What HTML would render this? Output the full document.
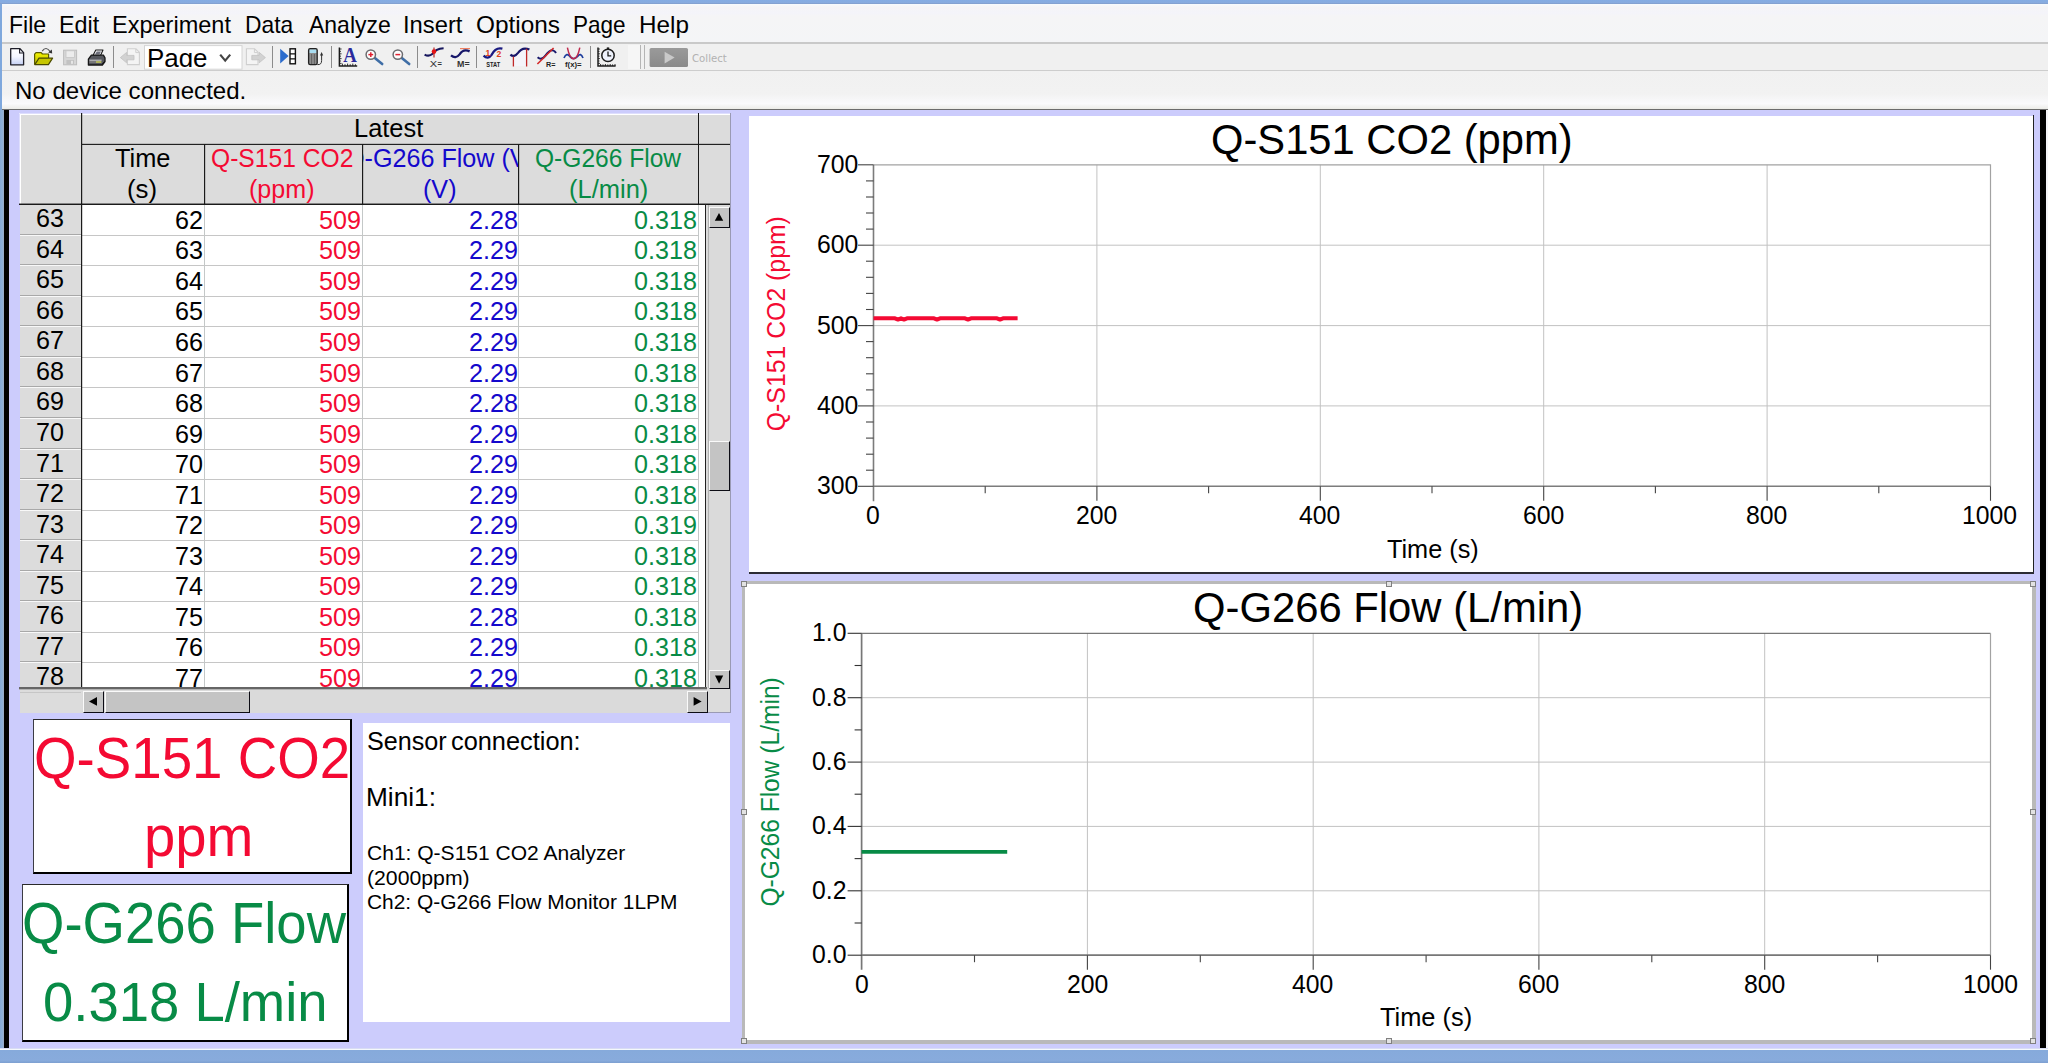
<!DOCTYPE html>
<html lang="en"><head><meta charset="utf-8"><title>Logger Pro</title>
<style>
html,body{margin:0;padding:0}
body{width:2048px;height:1063px;position:relative;overflow:hidden;background:#ccccfc;font-family:"Liberation Sans",sans-serif}
.t{position:absolute;white-space:pre;line-height:1;transform-origin:0 0;display:block}
.b{position:absolute}
svg{position:absolute;overflow:visible}
</style></head>
<body>
<div id="titlebar-edge" class="b" style="left:0;top:0;width:2048px;height:4px;background:linear-gradient(#84ade3 0,#88abde 70%,#7f9bc8 100%)"></div>
<div id="menubar" class="b" style="left:0;top:4px;width:2048px;height:38px;background:linear-gradient(#f7fbfd 0,#f5f5f6 3px,#f4f4fa 9px,#f5f5f6 12px,#f4f5f7 100%)"></div>
<div class="b" style="left:0px;top:42px;width:2048px;height:2px;background:#c9c9c9;"></div>
<div id="toolbar" class="b" style="left:0;top:44px;width:2048px;height:26px;background:#f0f0f0"></div>
<div class="b" style="left:0px;top:70px;width:2048px;height:1px;background:#cdcdcd;"></div>
<div id="statusbar" class="b" style="left:0;top:71px;width:2048px;height:38px;background:linear-gradient(#f1f1f1 0,#f2f2f2 60%,#fafafc 86%,#ecece8 100%)"></div>
<div class="b" style="left:0px;top:109px;width:2048px;height:1px;background:#6c6c6c;"></div>
<div class="b" style="left:0px;top:4px;width:2px;height:106px;background:#7fa8dd;"></div>
<div class="b" style="left:0px;top:110px;width:4px;height:939px;background:linear-gradient(90deg,#86a9d6,#8eafd8 60%,#9ca9c0);"></div>
<div class="b" style="left:4px;top:110px;width:5px;height:938px;background:#000;"></div>
<div class="b" style="left:2040px;top:110px;width:6px;height:938px;background:#000;"></div>
<div class="b" style="left:2046px;top:110px;width:2px;height:938px;background:#f4f4f8;"></div>
<div class="b" style="left:0px;top:1048px;width:2048px;height:1px;background:#d8dcf4;"></div>
<div class="b" style="left:0px;top:1049px;width:2048px;height:1px;background:#f4f8fc;"></div>
<div class="b" style="left:0px;top:1050px;width:2048px;height:13px;background:linear-gradient(#86aadb,#88abdc 80%,#7d9fd0);"></div>
<div id="menu">
<span class="t" style="left:8.70px;top:13.00px;font-size:24px;color:#000;transform:scaleX(0.9596);">File</span>
<span class="t" style="left:58.77px;top:13.00px;font-size:24px;color:#000;transform:scaleX(0.9724);">Edit</span>
<span class="t" style="left:112.26px;top:13.00px;font-size:24px;color:#000;transform:scaleX(0.9797);">Experiment</span>
<span class="t" style="left:245.12px;top:13.00px;font-size:24px;color:#000;transform:scaleX(0.9515);">Data</span>
<span class="t" style="left:308.74px;top:13.00px;font-size:24px;color:#000;transform:scaleX(0.9573);">Analyze</span>
<span class="t" style="left:402.80px;top:13.00px;font-size:24px;color:#000;transform:scaleX(0.9896);">Insert</span>
<span class="t" style="left:475.64px;top:13.00px;font-size:24px;color:#000;transform:scaleX(1.0154);">Options</span>
<span class="t" style="left:572.54px;top:13.00px;font-size:24px;color:#000;transform:scaleX(0.9389);">Page</span>
<span class="t" style="left:638.80px;top:13.00px;font-size:24px;color:#000;transform:scaleX(1.0112);">Help</span>
</div>
<span class="t" style="left:14.92px;top:79.00px;font-size:24px;color:#000;transform:scaleX(1.0019);">No device connected.</span>
<svg id="tbicons" style="left:0;top:44px" width="760" height="27" viewBox="0 44 760 27">
<defs>
<linearGradient id="gpage" x1="0" y1="0" x2="0" y2="1"><stop offset="0" stop-color="#fff"/><stop offset=".5" stop-color="#f4f6ff"/><stop offset="1" stop-color="#c4d0f4"/></linearGradient>
<linearGradient id="gfold" x1="0" y1="0" x2="0" y2="1"><stop offset="0" stop-color="#f6f600"/><stop offset="1" stop-color="#b8b800"/></linearGradient>
<linearGradient id="gcoll" x1="0" y1="0" x2="0" y2="1"><stop offset="0" stop-color="#9a9a9a"/><stop offset="1" stop-color="#8a8a8a"/></linearGradient>
</defs>
<rect x="113" y="46" width="1" height="22" fill="#8c8c8c"/>
<rect x="272" y="46" width="1" height="22" fill="#8c8c8c"/>
<rect x="331" y="46" width="1" height="22" fill="#8c8c8c"/>
<rect x="417" y="46" width="1" height="22" fill="#8c8c8c"/>
<rect x="476" y="46" width="1" height="22" fill="#8c8c8c"/>
<rect x="590" y="46" width="1" height="22" fill="#8c8c8c"/>
<rect x="640" y="45" width="1" height="24" fill="#b4b4b4"/>
<rect x="644" y="45" width="1" height="24" fill="#b4b4b4"/>
<rect x="628" y="45" width="12" height="24" fill="#f6f6f6"/>
<path d="M10.7 48.7 H20 L23.6 52.6 V64.8 H10.7 Z" fill="url(#gpage)" stroke="#1e1e28" stroke-width="1.3" stroke-linejoin="round"/><path d="M19.6 48.9 V53 H23.4" fill="none" stroke="#1e1e28" stroke-width="1.1"/>
<path d="M34.6 64.4 V54.2 L36 52.6 H41.2 L42.4 54 H48.6 V58" fill="url(#gfold)" stroke="#5a5a00" stroke-width="1.2" stroke-linejoin="round"/><path d="M34.8 64.6 L39 58.2 H52.6 L48.4 64.6 Z" fill="#c6c600" stroke="#4a4a00" stroke-width="1.2" stroke-linejoin="round"/><path d="M42.2 51.2 Q46 45.6 50.2 51.6" fill="none" stroke="#555" stroke-width="1.2"/><path d="M48.2 52.4 L52.2 53.6 L51.8 49.4 Z" fill="#333"/>
<rect x="63.6" y="50.2" width="13" height="14.6" fill="#d6d6d6" stroke="#bdbdbd" stroke-width="1"/><rect x="66" y="50.8" width="8.4" height="6.6" fill="#ececec" stroke="#c6c6c6" stroke-width=".8"/><rect x="66.4" y="60" width="7.6" height="4.4" fill="#c2c2c2"/><rect x="71" y="60.8" width="2" height="3" fill="#e6e6e6"/>
<path d="M92.8 55.8 L95.8 50 H103 L100.4 55.8 Z" fill="#f4f4f6" stroke="#1c1c1c" stroke-width="1.1" stroke-linejoin="round"/><path d="M95 54.6 L96.8 51.6 H101 L99.4 54.6 Z" fill="#6c6e7a"/><path d="M88.4 59.2 L91.4 55.2 H103.4 L105 57.8 V61.6 L102.4 65 H88.4 Z" fill="#55575d" stroke="#161616" stroke-width="1.3" stroke-linejoin="round"/><path d="M89.4 60.2 H101.6" stroke="#e4e4e4" stroke-width=".9"/><path d="M89.4 62 H96 " stroke="#8c8c8c" stroke-width="1.3"/><path d="M96 62 H101.4" stroke="#d8dc60" stroke-width="1.4"/><path d="M101.8 64.6 L104.6 61.4" stroke="#161616" stroke-width="1"/>
<path d="M127.4 48.8 H136 L139.4 52.2 V64.6 H127.4 Z" fill="#f4f4f4" stroke="#cfcfcf" stroke-width="1.1"/><path d="M135.8 49 V52.6 H139.2" fill="none" stroke="#cfcfcf" stroke-width="1"/><path d="M120.4 57.6 L126.6 52.4 V55.4 H134 V59.8 H126.6 V62.8 Z" fill="#d2d2d2" stroke="#c2c2c2" stroke-width=".8"/>
<path d="M246.4 48.8 H254.6 L258 52.2 V64.6 H246.4 Z" fill="#f4f4f4" stroke="#cfcfcf" stroke-width="1.1"/><path d="M254.4 49 V52.6 H257.8" fill="none" stroke="#cfcfcf" stroke-width="1"/><path d="M265.4 57.6 L259.2 52.4 V55.4 H251.8 V59.8 H259.2 V62.8 Z" fill="#d2d2d2" stroke="#c2c2c2" stroke-width=".8"/>
<rect x="144.5" y="45.6" width="97.5" height="23.6" fill="#fff" stroke="#d4d4d4" stroke-width="1"/>
<path d="M220.2 54.6 L225.2 60.6 L230.2 54.6" fill="none" stroke="#444" stroke-width="2.2"/>
<path d="M280.2 48.8 L288.6 56 L280.2 63.4 Z" fill="#2c6ccc"/><rect x="290" y="48.8" width="5.4" height="15" fill="#fff" stroke="#111" stroke-width="1.4"/><path d="M290 53.8 H295.4 M290 58.8 H295.4" stroke="#111" stroke-width="1.3"/>
<rect x="308.6" y="48.6" width="8.6" height="16" rx="1.6" fill="#8c8c8c" stroke="#222" stroke-width="1.3"/><rect x="309.6" y="49.6" width="6.6" height="3.4" fill="#a8dcf0"/><path d="M311.6 54 V64 M314.4 54 V64" stroke="#555" stroke-width=".8"/><path d="M317.4 64.6 Q321.6 65 321.6 60.6 V54" fill="none" stroke="#333" stroke-width="1"/><path d="M320 55.4 L321.6 52 L323.2 55.4 Z" fill="#333"/>
<path d="M339.4 47.4 V66 H357.2" fill="none" stroke="#1c1c1c" stroke-width="1.5"/><path d="M339.4 49 h2.2 M339.4 51.4 h1.6 M339.4 53.8 h2.2 M339.4 56.2 h1.6 M339.4 58.6 h2.2 M339.4 61 h1.6 M339.4 63.4 h2.2" stroke="#1c1c1c" stroke-width=".8"/><path d="M342.4 66 v-2.4 M345 66 v-1.8 M347.6 66 v-2.4 M350.2 66 v-1.8 M352.8 66 v-2.4 M355.4 66 v-1.8" stroke="#1c1c1c" stroke-width=".9"/>
<text x="343.2" y="62" font-family="Liberation Serif,serif" font-weight="bold" font-size="20" fill="#2a2a9c" textLength="13.6" lengthAdjust="spacingAndGlyphs">A</text>
<path d="M374.2 57.4 L382.2 64" stroke="#3f6ea6" stroke-width="2.6" stroke-linecap="round"/>
<circle cx="370.8" cy="54.6" r="4.7" fill="#fdfdfd" stroke="#6c6c70" stroke-width="1.5"/>
<path d="M368.40000000000003 54.6 H373.2" stroke="#e02030" stroke-width="1.5"/>
<path d="M370.8 52.2 V57" stroke="#e02030" stroke-width="1.5"/>
<path d="M401.2 57.4 L409.2 64" stroke="#3f6ea6" stroke-width="2.6" stroke-linecap="round"/>
<circle cx="397.8" cy="54.6" r="4.7" fill="#fdfdfd" stroke="#6c6c70" stroke-width="1.5"/>
<path d="M395.40000000000003 54.6 H400.2" stroke="#e02030" stroke-width="1.5"/>
<path d="M424.6 54.6 Q429 57 432.6 53.8 Q435.6 48.6 443.6 48.2" fill="none" stroke="#17175e" stroke-width="2.1"/><path d="M434 47.4 V57.6" stroke="#b01818" stroke-width="1.1"/><circle cx="434" cy="51.6" r="2.3" fill="#e41414"/>
<text x="429.8" y="67.2" font-size="9.4" fill="#333" textLength="7.4" lengthAdjust="spacingAndGlyphs">X</text>
<text x="437.6" y="65.6" font-size="7.5" font-weight="bold" fill="#333">=</text>
<path d="M460 48.6 H470" stroke="#f08060" stroke-width="1.2"/><path d="M451 55.4 Q455.6 59.4 459.6 54.4 Q463.4 48.4 469.6 51.4" fill="none" stroke="#17176a" stroke-width="2.3"/>
<text x="457" y="66.8" font-size="8.6" font-weight="bold" fill="#333" textLength="12.6" lengthAdjust="spacingAndGlyphs">M=</text>
<path d="M483.6 55.6 Q488 60 491.8 54.6 Q495.4 47 502.4 48.6" fill="none" stroke="#1a1a80" stroke-width="2.3"/>
<text x="485.6" y="56.4" font-size="8.6" font-weight="bold" fill="#e0401c">1</text>
<text x="496.4" y="57" font-size="8.6" font-weight="bold" fill="#e0401c">2</text>
<text x="486.2" y="67.2" font-size="7.6" font-weight="bold" fill="#222" textLength="14" lengthAdjust="spacingAndGlyphs">STAT</text>
<path d="M513.4 56.4 Q517 53.6 519.8 50.6 Q523 47 526.6 48.6 V66 H513.4 Z" fill="#f4f4fa" stroke="none"/><path d="M510.4 54.6 Q514 58 518 52.8 Q522.6 46.4 529.4 49.6" fill="none" stroke="#17176a" stroke-width="2.2"/><path d="M513.4 56.4 V66.4 M526.6 48.8 V66.4" stroke="#c02828" stroke-width="1.3"/>
<path d="M537.6 57.2 Q541.6 60.8 545.4 55.6 Q549.4 50 553 50.4 Q555 51 556 53" fill="none" stroke="#17176a" stroke-width="2"/><path d="M537.4 64 L553.6 48" stroke="#d42828" stroke-width="1.6"/>
<text x="546" y="67" font-size="8" font-weight="bold" fill="#222" textLength="9.4" lengthAdjust="spacingAndGlyphs">R=</text>
<path d="M564 58 Q566.6 52 570 56.6 Q573.6 60.8 577.6 56.4 Q580.6 52 583 58" fill="none" stroke="#1c3c9c" stroke-width="1.7"/><path d="M567.4 47.6 Q569.6 58.6 573.6 58.8 Q577.6 58.6 579.8 47.6" fill="none" stroke="#c0284c" stroke-width="1.5"/>
<text x="565" y="67" font-size="7.4" font-weight="bold" fill="#222" textLength="16.6" lengthAdjust="spacingAndGlyphs">f(x)=</text>
<path d="M598 47.4 V66 H615.6" fill="none" stroke="#1c1c1c" stroke-width="1.5"/><path d="M598 49 h2 M598 51.4 h1.5 M598 53.8 h2 M598 56.2 h1.5 M598 58.6 h2 M598 61 h1.5 M598 63.4 h2" stroke="#1c1c1c" stroke-width=".8"/><path d="M600.6 66 v-2 M603 66 v-1.6 M605.4 66 v-2 M607.8 66 v-1.6 M610.2 66 v-2 M612.6 66 v-1.6 M615 66 v-2" stroke="#1c1c1c" stroke-width=".9"/><circle cx="608" cy="55.4" r="6.2" fill="#eef2fc" stroke="#1c1c1c" stroke-width="1.5"/><path d="M608 51.4 V55.8 H611.2" fill="none" stroke="#1c1c1c" stroke-width="1.3"/><rect x="606.8" y="47.4" width="2.4" height="1.6" fill="#1c1c1c"/>
<rect x="649.6" y="48" width="38.4" height="19" rx="1.6" fill="url(#gcoll)"/><path d="M664.6 51.8 L674.6 57.6 L664.6 63.6 Z" fill="#c9c9c9"/>
</svg>
<div id="pagedd" class="b" style="left:145px;top:46px;width:74px;height:21.4px;overflow:hidden"><span class="t" style="left:1.56px;top:-0.80px;font-size:26.6px;color:#000;transform:scaleX(0.9747);">Page</span></div>
<span class="t" style="font-family:'DejaVu Sans',sans-serif;left:692.44px;top:53.40px;font-size:11.2px;color:#b2b2b2;transform:scaleX(0.9082);">Collect</span>
<div id="table">
<div class="b" style="left:20px;top:114px;width:711px;height:599px;background:#dcdcdc;"></div>
<div class="b" style="left:19px;top:113px;width:712px;height:1px;background:rgba(255,255,255,.35);"></div>
<div class="b" style="left:19px;top:113px;width:1px;height:91px;background:rgba(255,255,255,.35);"></div>
<div class="b" style="left:20px;top:114px;width:711px;height:1px;background:#fff;"></div>
<div class="b" style="left:20px;top:114px;width:1px;height:90px;background:#fff;"></div>
<div class="b" style="left:82px;top:205px;width:624px;height:483px;background:#fff;"></div>
<div class="b" style="left:20px;top:234px;width:61px;height:1px;background:#a8a8a8;"></div>
<div class="b" style="left:20px;top:235px;width:61px;height:1px;background:#f8f8f8;"></div>
<div class="b" style="left:82px;top:235px;width:617px;height:1px;background:#c6c6c6;"></div>
<div class="b" style="left:20px;top:264px;width:61px;height:1px;background:#a8a8a8;"></div>
<div class="b" style="left:20px;top:265px;width:61px;height:1px;background:#f8f8f8;"></div>
<div class="b" style="left:82px;top:265px;width:617px;height:1px;background:#c6c6c6;"></div>
<div class="b" style="left:20px;top:295px;width:61px;height:1px;background:#a8a8a8;"></div>
<div class="b" style="left:20px;top:296px;width:61px;height:1px;background:#f8f8f8;"></div>
<div class="b" style="left:82px;top:296px;width:617px;height:1px;background:#c6c6c6;"></div>
<div class="b" style="left:20px;top:325px;width:61px;height:1px;background:#a8a8a8;"></div>
<div class="b" style="left:20px;top:326px;width:61px;height:1px;background:#f8f8f8;"></div>
<div class="b" style="left:82px;top:326px;width:617px;height:1px;background:#c6c6c6;"></div>
<div class="b" style="left:20px;top:356px;width:61px;height:1px;background:#a8a8a8;"></div>
<div class="b" style="left:20px;top:357px;width:61px;height:1px;background:#f8f8f8;"></div>
<div class="b" style="left:82px;top:357px;width:617px;height:1px;background:#c6c6c6;"></div>
<div class="b" style="left:20px;top:386px;width:61px;height:1px;background:#a8a8a8;"></div>
<div class="b" style="left:20px;top:387px;width:61px;height:1px;background:#f8f8f8;"></div>
<div class="b" style="left:82px;top:387px;width:617px;height:1px;background:#c6c6c6;"></div>
<div class="b" style="left:20px;top:417px;width:61px;height:1px;background:#a8a8a8;"></div>
<div class="b" style="left:20px;top:418px;width:61px;height:1px;background:#f8f8f8;"></div>
<div class="b" style="left:82px;top:418px;width:617px;height:1px;background:#c6c6c6;"></div>
<div class="b" style="left:20px;top:448px;width:61px;height:1px;background:#a8a8a8;"></div>
<div class="b" style="left:20px;top:449px;width:61px;height:1px;background:#f8f8f8;"></div>
<div class="b" style="left:82px;top:449px;width:617px;height:1px;background:#c6c6c6;"></div>
<div class="b" style="left:20px;top:478px;width:61px;height:1px;background:#a8a8a8;"></div>
<div class="b" style="left:20px;top:479px;width:61px;height:1px;background:#f8f8f8;"></div>
<div class="b" style="left:82px;top:479px;width:617px;height:1px;background:#c6c6c6;"></div>
<div class="b" style="left:20px;top:509px;width:61px;height:1px;background:#a8a8a8;"></div>
<div class="b" style="left:20px;top:510px;width:61px;height:1px;background:#f8f8f8;"></div>
<div class="b" style="left:82px;top:510px;width:617px;height:1px;background:#c6c6c6;"></div>
<div class="b" style="left:20px;top:539px;width:61px;height:1px;background:#a8a8a8;"></div>
<div class="b" style="left:20px;top:540px;width:61px;height:1px;background:#f8f8f8;"></div>
<div class="b" style="left:82px;top:540px;width:617px;height:1px;background:#c6c6c6;"></div>
<div class="b" style="left:20px;top:570px;width:61px;height:1px;background:#a8a8a8;"></div>
<div class="b" style="left:20px;top:571px;width:61px;height:1px;background:#f8f8f8;"></div>
<div class="b" style="left:82px;top:571px;width:617px;height:1px;background:#c6c6c6;"></div>
<div class="b" style="left:20px;top:600px;width:61px;height:1px;background:#a8a8a8;"></div>
<div class="b" style="left:20px;top:601px;width:61px;height:1px;background:#f8f8f8;"></div>
<div class="b" style="left:82px;top:601px;width:617px;height:1px;background:#c6c6c6;"></div>
<div class="b" style="left:20px;top:631px;width:61px;height:1px;background:#a8a8a8;"></div>
<div class="b" style="left:20px;top:632px;width:61px;height:1px;background:#f8f8f8;"></div>
<div class="b" style="left:82px;top:632px;width:617px;height:1px;background:#c6c6c6;"></div>
<div class="b" style="left:20px;top:661px;width:61px;height:1px;background:#a8a8a8;"></div>
<div class="b" style="left:20px;top:662px;width:61px;height:1px;background:#f8f8f8;"></div>
<div class="b" style="left:82px;top:662px;width:617px;height:1px;background:#c6c6c6;"></div>
<div class="b" style="left:204px;top:205px;width:1px;height:483px;background:#c4c8c8;"></div>
<div class="b" style="left:362px;top:205px;width:1px;height:483px;background:#c4c8c8;"></div>
<div class="b" style="left:518px;top:205px;width:1px;height:483px;background:#c4c8c8;"></div>
<div class="b" style="left:698px;top:205px;width:1px;height:483px;background:#c4c8c8;"></div>
<div class="b" style="left:19px;top:205px;width:690px;height:482.6px;overflow:hidden">
<span class="t" style="left:17.21px;top:0.80px;font-size:25.4px;color:#000;transform:scaleX(0.9900);">63</span>
<span class="t" style="left:156.23px;top:2.80px;font-size:25.4px;color:#000;transform:scaleX(0.9900);">62</span>
<span class="t" style="left:300.24px;top:2.80px;font-size:25.4px;color:#f40a33;transform:scaleX(0.9900);">509</span>
<span class="t" style="left:450.16px;top:2.80px;font-size:25.4px;color:#1408cc;transform:scaleX(0.9900);">2.28</span>
<span class="t" style="left:615.47px;top:2.80px;font-size:25.4px;color:#088b46;transform:scaleX(0.9900);">0.318</span>
<span class="t" style="left:17.21px;top:31.80px;font-size:25.4px;color:#000;transform:scaleX(0.9900);">64</span>
<span class="t" style="left:156.23px;top:32.80px;font-size:25.4px;color:#000;transform:scaleX(0.9900);">63</span>
<span class="t" style="left:300.24px;top:32.80px;font-size:25.4px;color:#f40a33;transform:scaleX(0.9900);">509</span>
<span class="t" style="left:450.16px;top:32.80px;font-size:25.4px;color:#1408cc;transform:scaleX(0.9900);">2.29</span>
<span class="t" style="left:615.47px;top:32.80px;font-size:25.4px;color:#088b46;transform:scaleX(0.9900);">0.318</span>
<span class="t" style="left:17.21px;top:61.80px;font-size:25.4px;color:#000;transform:scaleX(0.9900);">65</span>
<span class="t" style="left:156.23px;top:63.80px;font-size:25.4px;color:#000;transform:scaleX(0.9900);">64</span>
<span class="t" style="left:300.24px;top:63.80px;font-size:25.4px;color:#f40a33;transform:scaleX(0.9900);">509</span>
<span class="t" style="left:450.16px;top:63.80px;font-size:25.4px;color:#1408cc;transform:scaleX(0.9900);">2.29</span>
<span class="t" style="left:615.47px;top:63.80px;font-size:25.4px;color:#088b46;transform:scaleX(0.9900);">0.318</span>
<span class="t" style="left:17.21px;top:92.80px;font-size:25.4px;color:#000;transform:scaleX(0.9900);">66</span>
<span class="t" style="left:156.23px;top:93.80px;font-size:25.4px;color:#000;transform:scaleX(0.9900);">65</span>
<span class="t" style="left:300.24px;top:93.80px;font-size:25.4px;color:#f40a33;transform:scaleX(0.9900);">509</span>
<span class="t" style="left:450.16px;top:93.80px;font-size:25.4px;color:#1408cc;transform:scaleX(0.9900);">2.29</span>
<span class="t" style="left:615.47px;top:93.80px;font-size:25.4px;color:#088b46;transform:scaleX(0.9900);">0.318</span>
<span class="t" style="left:17.21px;top:122.80px;font-size:25.4px;color:#000;transform:scaleX(0.9900);">67</span>
<span class="t" style="left:156.23px;top:124.80px;font-size:25.4px;color:#000;transform:scaleX(0.9900);">66</span>
<span class="t" style="left:300.24px;top:124.80px;font-size:25.4px;color:#f40a33;transform:scaleX(0.9900);">509</span>
<span class="t" style="left:450.16px;top:124.80px;font-size:25.4px;color:#1408cc;transform:scaleX(0.9900);">2.29</span>
<span class="t" style="left:615.47px;top:124.80px;font-size:25.4px;color:#088b46;transform:scaleX(0.9900);">0.318</span>
<span class="t" style="left:17.21px;top:153.80px;font-size:25.4px;color:#000;transform:scaleX(0.9900);">68</span>
<span class="t" style="left:156.23px;top:155.80px;font-size:25.4px;color:#000;transform:scaleX(0.9900);">67</span>
<span class="t" style="left:300.24px;top:155.80px;font-size:25.4px;color:#f40a33;transform:scaleX(0.9900);">509</span>
<span class="t" style="left:450.16px;top:155.80px;font-size:25.4px;color:#1408cc;transform:scaleX(0.9900);">2.29</span>
<span class="t" style="left:615.47px;top:155.80px;font-size:25.4px;color:#088b46;transform:scaleX(0.9900);">0.318</span>
<span class="t" style="left:17.21px;top:183.80px;font-size:25.4px;color:#000;transform:scaleX(0.9900);">69</span>
<span class="t" style="left:156.23px;top:185.80px;font-size:25.4px;color:#000;transform:scaleX(0.9900);">68</span>
<span class="t" style="left:300.24px;top:185.80px;font-size:25.4px;color:#f40a33;transform:scaleX(0.9900);">509</span>
<span class="t" style="left:450.16px;top:185.80px;font-size:25.4px;color:#1408cc;transform:scaleX(0.9900);">2.28</span>
<span class="t" style="left:615.47px;top:185.80px;font-size:25.4px;color:#088b46;transform:scaleX(0.9900);">0.318</span>
<span class="t" style="left:17.21px;top:214.80px;font-size:25.4px;color:#000;transform:scaleX(0.9900);">70</span>
<span class="t" style="left:156.23px;top:216.80px;font-size:25.4px;color:#000;transform:scaleX(0.9900);">69</span>
<span class="t" style="left:300.24px;top:216.80px;font-size:25.4px;color:#f40a33;transform:scaleX(0.9900);">509</span>
<span class="t" style="left:450.16px;top:216.80px;font-size:25.4px;color:#1408cc;transform:scaleX(0.9900);">2.29</span>
<span class="t" style="left:615.47px;top:216.80px;font-size:25.4px;color:#088b46;transform:scaleX(0.9900);">0.318</span>
<span class="t" style="left:17.21px;top:245.80px;font-size:25.4px;color:#000;transform:scaleX(0.9900);">71</span>
<span class="t" style="left:156.23px;top:246.80px;font-size:25.4px;color:#000;transform:scaleX(0.9900);">70</span>
<span class="t" style="left:300.24px;top:246.80px;font-size:25.4px;color:#f40a33;transform:scaleX(0.9900);">509</span>
<span class="t" style="left:450.16px;top:246.80px;font-size:25.4px;color:#1408cc;transform:scaleX(0.9900);">2.29</span>
<span class="t" style="left:615.47px;top:246.80px;font-size:25.4px;color:#088b46;transform:scaleX(0.9900);">0.318</span>
<span class="t" style="left:17.21px;top:275.80px;font-size:25.4px;color:#000;transform:scaleX(0.9900);">72</span>
<span class="t" style="left:156.23px;top:277.80px;font-size:25.4px;color:#000;transform:scaleX(0.9900);">71</span>
<span class="t" style="left:300.24px;top:277.80px;font-size:25.4px;color:#f40a33;transform:scaleX(0.9900);">509</span>
<span class="t" style="left:450.16px;top:277.80px;font-size:25.4px;color:#1408cc;transform:scaleX(0.9900);">2.29</span>
<span class="t" style="left:615.47px;top:277.80px;font-size:25.4px;color:#088b46;transform:scaleX(0.9900);">0.318</span>
<span class="t" style="left:17.21px;top:306.80px;font-size:25.4px;color:#000;transform:scaleX(0.9900);">73</span>
<span class="t" style="left:156.23px;top:307.80px;font-size:25.4px;color:#000;transform:scaleX(0.9900);">72</span>
<span class="t" style="left:300.24px;top:307.80px;font-size:25.4px;color:#f40a33;transform:scaleX(0.9900);">509</span>
<span class="t" style="left:450.16px;top:307.80px;font-size:25.4px;color:#1408cc;transform:scaleX(0.9900);">2.29</span>
<span class="t" style="left:615.47px;top:307.80px;font-size:25.4px;color:#088b46;transform:scaleX(0.9900);">0.319</span>
<span class="t" style="left:17.21px;top:336.80px;font-size:25.4px;color:#000;transform:scaleX(0.9900);">74</span>
<span class="t" style="left:156.23px;top:338.80px;font-size:25.4px;color:#000;transform:scaleX(0.9900);">73</span>
<span class="t" style="left:300.24px;top:338.80px;font-size:25.4px;color:#f40a33;transform:scaleX(0.9900);">509</span>
<span class="t" style="left:450.16px;top:338.80px;font-size:25.4px;color:#1408cc;transform:scaleX(0.9900);">2.29</span>
<span class="t" style="left:615.47px;top:338.80px;font-size:25.4px;color:#088b46;transform:scaleX(0.9900);">0.318</span>
<span class="t" style="left:17.21px;top:367.80px;font-size:25.4px;color:#000;transform:scaleX(0.9900);">75</span>
<span class="t" style="left:156.23px;top:368.80px;font-size:25.4px;color:#000;transform:scaleX(0.9900);">74</span>
<span class="t" style="left:300.24px;top:368.80px;font-size:25.4px;color:#f40a33;transform:scaleX(0.9900);">509</span>
<span class="t" style="left:450.16px;top:368.80px;font-size:25.4px;color:#1408cc;transform:scaleX(0.9900);">2.29</span>
<span class="t" style="left:615.47px;top:368.80px;font-size:25.4px;color:#088b46;transform:scaleX(0.9900);">0.318</span>
<span class="t" style="left:17.21px;top:397.80px;font-size:25.4px;color:#000;transform:scaleX(0.9900);">76</span>
<span class="t" style="left:156.23px;top:399.80px;font-size:25.4px;color:#000;transform:scaleX(0.9900);">75</span>
<span class="t" style="left:300.24px;top:399.80px;font-size:25.4px;color:#f40a33;transform:scaleX(0.9900);">509</span>
<span class="t" style="left:450.16px;top:399.80px;font-size:25.4px;color:#1408cc;transform:scaleX(0.9900);">2.28</span>
<span class="t" style="left:615.47px;top:399.80px;font-size:25.4px;color:#088b46;transform:scaleX(0.9900);">0.318</span>
<span class="t" style="left:17.21px;top:428.80px;font-size:25.4px;color:#000;transform:scaleX(0.9900);">77</span>
<span class="t" style="left:156.23px;top:429.80px;font-size:25.4px;color:#000;transform:scaleX(0.9900);">76</span>
<span class="t" style="left:300.24px;top:429.80px;font-size:25.4px;color:#f40a33;transform:scaleX(0.9900);">509</span>
<span class="t" style="left:450.16px;top:429.80px;font-size:25.4px;color:#1408cc;transform:scaleX(0.9900);">2.29</span>
<span class="t" style="left:615.47px;top:429.80px;font-size:25.4px;color:#088b46;transform:scaleX(0.9900);">0.318</span>
<span class="t" style="left:17.21px;top:458.80px;font-size:25.4px;color:#000;transform:scaleX(0.9900);">78</span>
<span class="t" style="left:156.23px;top:460.80px;font-size:25.4px;color:#000;transform:scaleX(0.9900);">77</span>
<span class="t" style="left:300.24px;top:460.80px;font-size:25.4px;color:#f40a33;transform:scaleX(0.9900);">509</span>
<span class="t" style="left:450.16px;top:460.80px;font-size:25.4px;color:#1408cc;transform:scaleX(0.9900);">2.29</span>
<span class="t" style="left:615.47px;top:460.80px;font-size:25.4px;color:#088b46;transform:scaleX(0.9900);">0.318</span>
</div>
<div class="b" style="left:81px;top:113px;width:1px;height:576px;background:#1a1a1a;"></div>
<div class="b" style="left:82px;top:113px;width:1px;height:576px;background:rgba(0,0,0,.18);"></div>
<div class="b" style="left:81px;top:144px;width:650px;height:1px;background:#222;"></div>
<div class="b" style="left:81px;top:143px;width:650px;height:1px;background:rgba(0,0,0,.15);"></div>
<div class="b" style="left:19px;top:203px;width:712px;height:1px;background:rgba(0,0,0,.4);"></div>
<div class="b" style="left:19px;top:204px;width:712px;height:1px;background:#1a1a1a;"></div>
<div class="b" style="left:204px;top:144px;width:1px;height:60px;background:#1a1a1a;"></div>
<div class="b" style="left:205px;top:144px;width:1px;height:60px;background:rgba(0,0,0,.15);"></div>
<div class="b" style="left:362px;top:144px;width:1px;height:60px;background:#1a1a1a;"></div>
<div class="b" style="left:363px;top:144px;width:1px;height:60px;background:rgba(0,0,0,.15);"></div>
<div class="b" style="left:518px;top:144px;width:1px;height:60px;background:#1a1a1a;"></div>
<div class="b" style="left:519px;top:144px;width:1px;height:60px;background:rgba(0,0,0,.15);"></div>
<div class="b" style="left:698px;top:113px;width:1px;height:91px;background:#1a1a1a;"></div>
<div class="b" style="left:705px;top:204px;width:1px;height:485px;background:#222;"></div>
<div class="b" style="left:19px;top:687px;width:688px;height:2px;background:#666;"></div>
<div class="b" style="left:19px;top:689px;width:688px;height:1px;background:#b4b4b4;"></div>
<span class="t" style="left:353.90px;top:115.80px;font-size:25.4px;color:#000;transform:scaleX(1.0011);">Latest</span>
<span class="t" style="left:115.03px;top:145.80px;font-size:25.4px;color:#000;transform:scaleX(0.9991);">Time</span>
<span class="t" style="left:127.14px;top:176.80px;font-size:25.4px;color:#000;transform:scaleX(1.0164);">(s)</span>
<span class="t" style="left:210.73px;top:145.80px;font-size:25.4px;color:#f40a33;transform:scaleX(0.9700);">Q-S151 CO2</span>
<span class="t" style="left:249.03px;top:176.80px;font-size:25.4px;color:#f40a33;transform:scaleX(0.9886);">(ppm)</span>
<div class="b" style="left:363px;top:145px;width:154.6px;height:58px;overflow:hidden"><span class="t" style="left:-18.02px;top:0.80px;font-size:25.4px;color:#1408cc;transform:scaleX(0.9900);">Q-G266 Flow (V)</span><span class="t" style="left:60.24px;top:31.80px;font-size:25.4px;color:#1408cc;transform:scaleX(0.9900);">(V)</span></div>
<span class="t" style="left:534.83px;top:145.80px;font-size:25.4px;color:#088b46;transform:scaleX(0.9672);">Q-G266 Flow</span>
<span class="t" style="left:568.81px;top:176.80px;font-size:25.4px;color:#088b46;transform:scaleX(1.0037);">(L/min)</span>
<div class="b" style="left:707px;top:205px;width:24px;height:483px;background:#dadada;"></div>
<div class="b" style="left:708px;top:205px;width:1px;height:483px;background:#b2b2b2;"></div>
<div class="b" style="left:709px;top:207px;width:19px;height:19px;background:#c4c4c4;border:1px solid;border-color:#fafafa #0c0c14 #0c0c14 #fafafa"></div>
<div class="b" style="left:709px;top:441px;width:19px;height:48px;background:#c4c4c4;border:1px solid;border-color:#fafafa #0c0c14 #0c0c14 #fafafa"></div>
<div class="b" style="left:709px;top:670px;width:19px;height:17px;background:#c4c4c4;border:1px solid;border-color:#fafafa #0c0c14 #0c0c14 #fafafa"></div>
<svg style="left:707px;top:205px" width="24" height="484" viewBox="707 205 24 484"><path d="M714.8 220.8 L719 213 L723.2 220.8 Z" fill="#000"/><path d="M715 675.6 L723.2 675.6 L719.1 683.8 Z" fill="#000"/></svg>
<div class="b" style="left:82px;top:690px;width:625px;height:23px;background:#dadada;"></div>
<div class="b" style="left:20px;top:691.6px;width:61px;height:1px;background:#c6c6c6;"></div>
<div class="b" style="left:83px;top:691px;width:19px;height:20px;background:#c4c4c4;border:1px solid;border-color:#fafafa #0c0c14 #0c0c14 #fafafa"></div>
<div class="b" style="left:105px;top:691px;width:143px;height:20px;background:#c4c4c4;border:1px solid;border-color:#fafafa #0c0c14 #0c0c14 #fafafa"></div>
<div class="b" style="left:687px;top:691px;width:19px;height:20px;background:#c4c4c4;border:1px solid;border-color:#fafafa #0c0c14 #0c0c14 #fafafa"></div>
<svg style="left:82px;top:690px" width="626" height="23" viewBox="82 690 626 23"><path d="M89 701.4 L97 697 L97 705.8 Z" fill="#000"/><path d="M701.6 701.4 L693.6 697 L693.6 705.8 Z" fill="#000"/></svg>
<div class="b" style="left:730px;top:113px;width:1px;height:600px;background:#9a9ab4;"></div>
<div class="b" style="left:708px;top:712px;width:23px;height:1px;background:#9a9ab4;"></div>
</div>
<div id="meter1" class="b" style="left:33px;top:719px;width:316px;height:152px;background:#fff;border:solid;border-color:#2a2a2a #000 #000 #3c3c44;border-width:1px 2px 2px 1px"></div>
<span class="t" style="left:33.50px;top:729.75px;font-size:57.5px;color:#f40a33;transform:scaleX(0.9512);">Q-S151 CO2</span>
<span class="t" style="left:144.44px;top:807.75px;font-size:57.5px;color:#f40a33;transform:scaleX(0.9783);">ppm</span>
<div id="meter2" class="b" style="left:22px;top:884px;width:324px;height:155px;background:#fff;border:solid;border-color:#2a2a2a #000 #000 #3c3c44;border-width:1px 2px 2px 1px"></div>
<span class="t" style="left:21.81px;top:894.75px;font-size:57.5px;color:#088b46;transform:scaleX(0.9476);">Q-G266 Flow</span>
<span class="t" style="left:43.22px;top:974.00px;font-size:56px;color:#088b46;transform:scaleX(0.9727);">0.318 L/min</span>
<div id="notes" class="b" style="left:363px;top:723px;width:367px;height:299px;background:#fff"></div>
<span class="t" style="left:366.97px;top:728.80px;font-size:25.4px;color:#000;transform:scaleX(0.9907);">Sensor</span>
<span class="t" style="left:451.42px;top:728.80px;font-size:25.4px;color:#000;transform:scaleX(0.9980);">connection:</span>
<span class="t" style="left:366.13px;top:784.80px;font-size:25.4px;color:#000;transform:scaleX(1.0336);">Mini1:</span>
<span class="t" style="left:366.95px;top:843.30px;font-size:20.4px;color:#000;transform:scaleX(1.0311);">Ch1: Q-S151 CO2 Analyzer</span>
<span class="t" style="left:367.07px;top:868.30px;font-size:20.4px;color:#000;transform:scaleX(1.0408);">(2000ppm)</span>
<span class="t" style="left:366.95px;top:892.30px;font-size:20.4px;color:#000;transform:scaleX(1.0259);">Ch2: Q-G266 Flow Monitor 1LPM</span>
<div id="graph1" class="b" style="left:749px;top:116px;width:1284px;height:456px;background:#fff"></div>
<div class="b" style="left:2033px;top:115px;width:1.2px;height:459px;background:#222;"></div>
<div class="b" style="left:749px;top:572px;width:1285px;height:1.8px;background:#2c2c34;"></div>
<svg style="left:0;top:0" width="2048" height="600" viewBox="0 0 2048 600">
<path d="M1096.9 164.8 V486.3" stroke="#c2c2c2" stroke-width="1"/>
<path d="M1320.3 164.8 V486.3" stroke="#c2c2c2" stroke-width="1"/>
<path d="M1543.7 164.8 V486.3" stroke="#c2c2c2" stroke-width="1"/>
<path d="M1767.1 164.8 V486.3" stroke="#c2c2c2" stroke-width="1"/>
<path d="M873.5 405.9 H1990.5" stroke="#c2c2c2" stroke-width="1"/>
<path d="M873.5 325.6 H1990.5" stroke="#c2c2c2" stroke-width="1"/>
<path d="M873.5 245.2 H1990.5" stroke="#c2c2c2" stroke-width="1"/>
<path d="M873.5 164.8 H1990.5 V486.3" fill="none" stroke="#a2a2a2" stroke-width="1.2"/>
<path d="M873.5 164.8 V501.3 M873.5 486.3 H1990.5" fill="none" stroke="#7c7c7c" stroke-width="1.6"/>
<path d="M858.0 164.8 H873.5" stroke="#444" stroke-width="1.1"/>
<path d="M866.0 180.9 H873.5" stroke="#444" stroke-width="1.1"/>
<path d="M866.0 197.0 H873.5" stroke="#444" stroke-width="1.1"/>
<path d="M866.0 213.0 H873.5" stroke="#444" stroke-width="1.1"/>
<path d="M866.0 229.1 H873.5" stroke="#444" stroke-width="1.1"/>
<path d="M858.0 245.2 H873.5" stroke="#444" stroke-width="1.1"/>
<path d="M866.0 261.2 H873.5" stroke="#444" stroke-width="1.1"/>
<path d="M866.0 277.3 H873.5" stroke="#444" stroke-width="1.1"/>
<path d="M866.0 293.4 H873.5" stroke="#444" stroke-width="1.1"/>
<path d="M866.0 309.5 H873.5" stroke="#444" stroke-width="1.1"/>
<path d="M858.0 325.6 H873.5" stroke="#444" stroke-width="1.1"/>
<path d="M866.0 341.6 H873.5" stroke="#444" stroke-width="1.1"/>
<path d="M866.0 357.7 H873.5" stroke="#444" stroke-width="1.1"/>
<path d="M866.0 373.8 H873.5" stroke="#444" stroke-width="1.1"/>
<path d="M866.0 389.9 H873.5" stroke="#444" stroke-width="1.1"/>
<path d="M858.0 405.9 H873.5" stroke="#444" stroke-width="1.1"/>
<path d="M866.0 422.0 H873.5" stroke="#444" stroke-width="1.1"/>
<path d="M866.0 438.1 H873.5" stroke="#444" stroke-width="1.1"/>
<path d="M866.0 454.2 H873.5" stroke="#444" stroke-width="1.1"/>
<path d="M866.0 470.2 H873.5" stroke="#444" stroke-width="1.1"/>
<path d="M858.0 486.3 H873.5" stroke="#444" stroke-width="1.1"/>
<path d="M985.2 486.3 V493.3" stroke="#444" stroke-width="1.1"/>
<path d="M1096.9 486.3 V500.8" stroke="#444" stroke-width="1.1"/>
<path d="M1208.6 486.3 V493.3" stroke="#444" stroke-width="1.1"/>
<path d="M1320.3 486.3 V500.8" stroke="#444" stroke-width="1.1"/>
<path d="M1432.0 486.3 V493.3" stroke="#444" stroke-width="1.1"/>
<path d="M1543.7 486.3 V500.8" stroke="#444" stroke-width="1.1"/>
<path d="M1655.4 486.3 V493.3" stroke="#444" stroke-width="1.1"/>
<path d="M1767.1 486.3 V500.8" stroke="#444" stroke-width="1.1"/>
<path d="M1878.8 486.3 V493.3" stroke="#444" stroke-width="1.1"/>
<path d="M1990.5 486.3 V500.8" stroke="#444" stroke-width="1.1"/>
<path d="M873.5 318.3 L895 318.3 L898 319.6 L901 318.3 L901 318.3 L904 319.6 L907 318.3 L934 318.3 L937 319.6 L940 318.3 L965 318.3 L968 319.6 L971 318.3 L997 318.3 L1000 319.6 L1003 318.3 L1017.6 318.3" fill="none" stroke="#f40a33" stroke-width="4" stroke-linejoin="round"/>
</svg>
<span class="t" style="left:1210.52px;top:118.10px;font-size:42.8px;color:#000;transform:scaleX(0.9747);">Q-S151 CO2 (ppm)</span>
<span class="t" style="left:866.11px;top:502.80px;font-size:25.4px;color:#000;transform:scaleX(0.9758);">0</span>
<span class="t" style="left:1075.72px;top:502.80px;font-size:25.4px;color:#000;transform:scaleX(0.9758);">200</span>
<span class="t" style="left:1299.12px;top:502.80px;font-size:25.4px;color:#000;transform:scaleX(0.9758);">400</span>
<span class="t" style="left:1522.52px;top:502.80px;font-size:25.4px;color:#000;transform:scaleX(0.9758);">600</span>
<span class="t" style="left:1745.92px;top:502.80px;font-size:25.4px;color:#000;transform:scaleX(0.9758);">800</span>
<span class="t" style="left:1962.43px;top:502.80px;font-size:25.4px;color:#000;transform:scaleX(0.9758);">1000</span>
<span class="t" style="left:816.84px;top:472.80px;font-size:25.4px;color:#000;transform:scaleX(0.9758);">300</span>
<span class="t" style="left:816.84px;top:392.80px;font-size:25.4px;color:#000;transform:scaleX(0.9758);">400</span>
<span class="t" style="left:816.84px;top:312.80px;font-size:25.4px;color:#000;transform:scaleX(0.9758);">500</span>
<span class="t" style="left:816.84px;top:231.80px;font-size:25.4px;color:#000;transform:scaleX(0.9758);">600</span>
<span class="t" style="left:816.84px;top:151.80px;font-size:25.4px;color:#000;transform:scaleX(0.9758);">700</span>
<span class="t" style="left:1386.83px;top:536.80px;font-size:25.4px;color:#000;transform:scaleX(0.9958);">Time (s)</span>
<span class="t" style="left:0;top:0;font-size:25.4px;color:#f40a33;transform:translate(763.50px,431.18px) rotate(-90deg) scaleX(0.9769);">Q-S151 CO2 (ppm)</span>
<div id="graph2" class="b" style="left:742px;top:581px;width:1287px;height:456px;background:#fff;border:solid #b9b9b9;border-width:3px 4px 4px 3px"></div>
<div class="b" style="left:741px;top:581px;width:4px;height:4px;background:#e2e2e2;border:1px solid #808080"></div>
<div class="b" style="left:1386px;top:581px;width:4px;height:4px;background:#e2e2e2;border:1px solid #808080"></div>
<div class="b" style="left:2030px;top:581px;width:4px;height:4px;background:#e2e2e2;border:1px solid #808080"></div>
<div class="b" style="left:741px;top:809px;width:4px;height:4px;background:#e2e2e2;border:1px solid #808080"></div>
<div class="b" style="left:2030px;top:809px;width:4px;height:4px;background:#e2e2e2;border:1px solid #808080"></div>
<div class="b" style="left:741px;top:1038px;width:4px;height:4px;background:#e2e2e2;border:1px solid #808080"></div>
<div class="b" style="left:1386px;top:1038px;width:4px;height:4px;background:#e2e2e2;border:1px solid #808080"></div>
<div class="b" style="left:2030px;top:1038px;width:4px;height:4px;background:#e2e2e2;border:1px solid #808080"></div>
<svg style="left:0;top:0" width="2048" height="1063" viewBox="0 0 2048 1063">
<path d="M1087.4 633.3 V955.2" stroke="#c2c2c2" stroke-width="1"/>
<path d="M1313.2 633.3 V955.2" stroke="#c2c2c2" stroke-width="1"/>
<path d="M1538.9 633.3 V955.2" stroke="#c2c2c2" stroke-width="1"/>
<path d="M1764.7 633.3 V955.2" stroke="#c2c2c2" stroke-width="1"/>
<path d="M861.6 890.8 H1990.5" stroke="#c2c2c2" stroke-width="1"/>
<path d="M861.6 826.4 H1990.5" stroke="#c2c2c2" stroke-width="1"/>
<path d="M861.6 762.1 H1990.5" stroke="#c2c2c2" stroke-width="1"/>
<path d="M861.6 697.7 H1990.5" stroke="#c2c2c2" stroke-width="1"/>
<path d="M861.6 633.3 H1990.5" fill="none" stroke="#555" stroke-width="1"/>
<path d="M1990.5 633.3 V955.2" fill="none" stroke="#a2a2a2" stroke-width="1.2"/>
<path d="M861.6 633.3 V969.7 M861.6 955.2 H1990.5" fill="none" stroke="#777" stroke-width="1.7"/>
<path d="M847.6 633.3 H861.6" stroke="#333" stroke-width="1.1"/>
<path d="M854.6 665.5 H861.6" stroke="#333" stroke-width="1.1"/>
<path d="M847.6 697.7 H861.6" stroke="#333" stroke-width="1.1"/>
<path d="M854.6 729.9 H861.6" stroke="#333" stroke-width="1.1"/>
<path d="M847.6 762.1 H861.6" stroke="#333" stroke-width="1.1"/>
<path d="M854.6 794.2 H861.6" stroke="#333" stroke-width="1.1"/>
<path d="M847.6 826.4 H861.6" stroke="#333" stroke-width="1.1"/>
<path d="M854.6 858.6 H861.6" stroke="#333" stroke-width="1.1"/>
<path d="M847.6 890.8 H861.6" stroke="#333" stroke-width="1.1"/>
<path d="M854.6 923.0 H861.6" stroke="#333" stroke-width="1.1"/>
<path d="M847.6 955.2 H861.6" stroke="#333" stroke-width="1.1"/>
<path d="M974.5 955.2 V962.2" stroke="#444" stroke-width="1.1"/>
<path d="M1087.4 955.2 V969.7" stroke="#444" stroke-width="1.1"/>
<path d="M1200.3 955.2 V962.2" stroke="#444" stroke-width="1.1"/>
<path d="M1313.2 955.2 V969.7" stroke="#444" stroke-width="1.1"/>
<path d="M1426.1 955.2 V962.2" stroke="#444" stroke-width="1.1"/>
<path d="M1538.9 955.2 V969.7" stroke="#444" stroke-width="1.1"/>
<path d="M1651.8 955.2 V962.2" stroke="#444" stroke-width="1.1"/>
<path d="M1764.7 955.2 V969.7" stroke="#444" stroke-width="1.1"/>
<path d="M1877.6 955.2 V962.2" stroke="#444" stroke-width="1.1"/>
<path d="M1990.5 955.2 V969.7" stroke="#444" stroke-width="1.1"/>
<path d="M861.6 851.9 H1007.2" stroke="#088b46" stroke-width="3.8"/>
</svg>
<span class="t" style="left:1193.41px;top:586.10px;font-size:42.8px;color:#000;transform:scaleX(0.9766);">Q-G266 Flow (L/min)</span>
<span class="t" style="left:854.71px;top:971.80px;font-size:25.4px;color:#000;transform:scaleX(0.9758);">0</span>
<span class="t" style="left:1066.70px;top:971.80px;font-size:25.4px;color:#000;transform:scaleX(0.9758);">200</span>
<span class="t" style="left:1292.48px;top:971.80px;font-size:25.4px;color:#000;transform:scaleX(0.9758);">400</span>
<span class="t" style="left:1518.26px;top:971.80px;font-size:25.4px;color:#000;transform:scaleX(0.9758);">600</span>
<span class="t" style="left:1744.04px;top:971.80px;font-size:25.4px;color:#000;transform:scaleX(0.9758);">800</span>
<span class="t" style="left:1962.93px;top:971.80px;font-size:25.4px;color:#000;transform:scaleX(0.9758);">1000</span>
<span class="t" style="left:812.14px;top:941.80px;font-size:25.4px;color:#000;transform:scaleX(0.9758);">0.0</span>
<span class="t" style="left:812.14px;top:877.80px;font-size:25.4px;color:#000;transform:scaleX(0.9758);">0.2</span>
<span class="t" style="left:812.14px;top:812.80px;font-size:25.4px;color:#000;transform:scaleX(0.9758);">0.4</span>
<span class="t" style="left:812.14px;top:748.80px;font-size:25.4px;color:#000;transform:scaleX(0.9758);">0.6</span>
<span class="t" style="left:812.14px;top:684.80px;font-size:25.4px;color:#000;transform:scaleX(0.9758);">0.8</span>
<span class="t" style="left:812.14px;top:619.80px;font-size:25.4px;color:#000;transform:scaleX(0.9758);">1.0</span>
<span class="t" style="left:1380.43px;top:1004.80px;font-size:25.4px;color:#000;transform:scaleX(1.0002);">Time (s)</span>
<span class="t" style="left:0;top:0;font-size:25.4px;color:#088b46;transform:translate(758.30px,906.57px) rotate(-90deg) scaleX(0.9675);">Q-G266 Flow (L/min)</span>
</body></html>
